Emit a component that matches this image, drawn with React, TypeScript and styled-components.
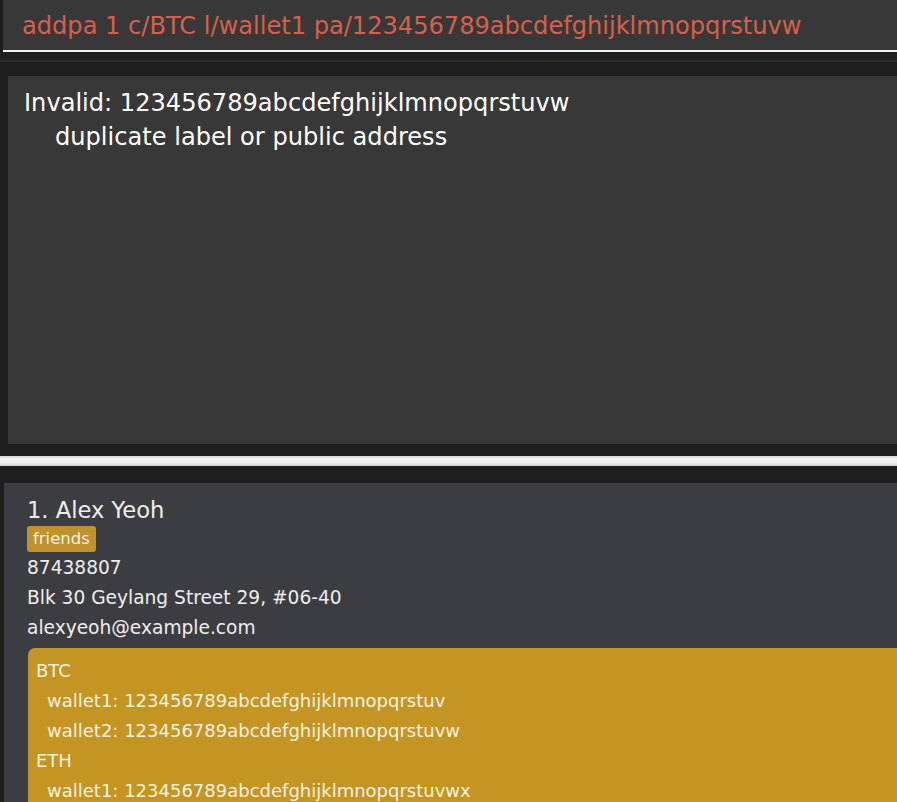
import React from "react";
import styled, { createGlobalStyle } from "styled-components";

const Global = createGlobalStyle`
  html, body { margin: 0; padding: 0; background: #1e1e1e; }
  body { font-family: "DejaVu Sans", "Comic Sans MS", sans-serif; overflow: hidden; }
  #root { width: 897px; height: 802px; }
`;

const Page = styled.div`
  width: 897px;
  height: 802px;
  display: flex;
  flex-direction: column;
  background: #1e1e1e;
  overflow: hidden;
`;

const CommandBox = styled.div`
  flex-shrink: 0;
  margin-left: 3px;
  height: 50px;
  background: #383838;
  border-bottom: 2px solid #f2f2f2;
  display: flex;
  align-items: center;
  padding-left: 19px;
  box-sizing: content-box;
`;

const CommandText = styled.span`
  color: #d6604b;
  font-size: 24.1px;
  white-space: nowrap;
  padding-top: 2px;
`;

const PaneGap = styled.div<{ $h: number }>`
  height: ${(p) => p.$h}px;
  flex-shrink: 0;
`;

const ThinDivider = styled.div`
  height: 14px;
  border-top: 2px solid #2c2c2c;
  margin-top: 8px;
  flex-shrink: 0;
`;

const ResultBox = styled.div`
  margin-left: 8px;
  height: 368px;
  background: #383838;
  padding: 10px 0 0 16px;
  box-sizing: border-box;
  flex-shrink: 0;
`;

const ResultLine = styled.div<{ $indent?: boolean }>`
  color: #ffffff;
  font-size: 24.1px;
  line-height: 34px;
  padding-left: ${(p) => (p.$indent ? 31 : 0)}px;
  white-space: nowrap;
`;

const Splitter = styled.div`
  height: 10px;
  flex-shrink: 0;
  background: linear-gradient(#d4d4d4, #f2f2f2 30%, #eeeeee 70%, #cfcfcf);
`;

const ListPanel = styled.div`
  margin-left: 4px;
  flex: 1;
  min-height: 0;
  overflow: hidden;
  background: #3c3d40;
  padding: 13px 0 0 23px;
  box-sizing: border-box;
  display: flex;
  flex-direction: column;
  align-items: flex-start;
`;

const Name = styled.div`
  color: #eeeeee;
  font-size: 22.6px;
  line-height: 28px;
  white-space: nowrap;
`;

const Tag = styled.span`
  background: #c0922b;
  color: #f4f0e6;
  font-size: 16.5px;
  line-height: 26px;
  height: 26px;
  padding: 0 6px;
  border-radius: 3px;
  margin-top: 2px;
`;

const Field = styled.div`
  color: #eeeeee;
  font-size: 18.6px;
  line-height: 30px;
  white-space: nowrap;
`;

const FieldGroup = styled.div`
  margin-top: 1px;
  display: flex;
  flex-direction: column;
`;

const WalletBox = styled.div`
  margin-top: 5px;
  align-self: stretch;
  margin-left: 1px;
  flex: 1 0 auto;
  background: #c49522;
  border-radius: 7px 0 0 0;
  padding: 8px 0 0 8px;
`;

const WalletLine = styled.div<{ $indent?: boolean }>`
  color: #f7f1e2;
  font-size: 18px;
  line-height: 30px;
  padding-left: ${(p) => (p.$indent ? 11 : 0)}px;
  white-space: nowrap;
`;

const wallets: { coin: string; items: [string, string][] }[] = [
  {
    coin: "BTC",
    items: [
      ["wallet1", "123456789abcdefghijklmnopqrstuv"],
      ["wallet2", "123456789abcdefghijklmnopqrstuvw"],
    ],
  },
  {
    coin: "ETH",
    items: [["wallet1", "123456789abcdefghijklmnopqrstuvwx"]],
  },
];

export default function App() {
  return (
    <Page>
      <Global />
      <CommandBox>
        <CommandText>addpa 1 c/BTC l/wallet1 pa/123456789abcdefghijklmnopqrstuvw</CommandText>
      </CommandBox>
      <ThinDivider />
      <ResultBox>
        <ResultLine>Invalid: 123456789abcdefghijklmnopqrstuvw</ResultLine>
        <ResultLine $indent>duplicate label or public address</ResultLine>
      </ResultBox>
      <PaneGap $h={12} />
      <Splitter />
      <PaneGap $h={17} />
      <ListPanel>
        <Name>1. Alex Yeoh</Name>
        <Tag>friends</Tag>
        <FieldGroup>
          <Field>87438807</Field>
          <Field>Blk 30 Geylang Street 29, #06-40</Field>
          <Field>alexyeoh@example.com</Field>
        </FieldGroup>
        <WalletBox>
          {wallets.map((w) => (
            <React.Fragment key={w.coin}>
              <WalletLine>{w.coin}</WalletLine>
              {w.items.map(([label, addr]) => (
                <WalletLine $indent key={label}>
                  {label}: {addr}
                </WalletLine>
              ))}
            </React.Fragment>
          ))}
        </WalletBox>
      </ListPanel>
    </Page>
  );
}
